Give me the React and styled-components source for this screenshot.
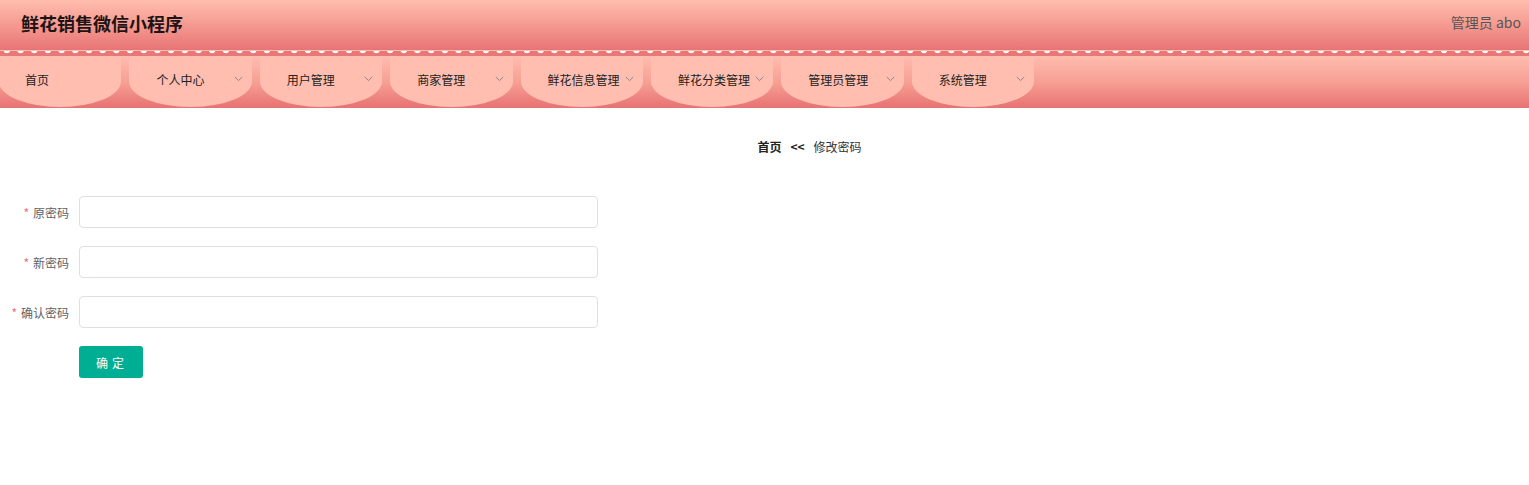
import React from 'react';
import styled, { createGlobalStyle } from 'styled-components';

const GlobalStyle = createGlobalStyle`
  body {
    margin: 0;
    background: #fff;
    font-family: "Microsoft YaHei", "Noto Sans CJK SC", "Noto Sans", sans-serif;
  }
`;

const Page = styled.div`
  width: 1529px;
  min-height: 485px;
  background: #fff;
  overflow: hidden;
`;

const Header = styled.div`
  height: 50px;
  display: flex;
  align-items: center;
  justify-content: space-between;
  padding: 0 8px 0 21px;
  box-sizing: border-box;
  background: linear-gradient(180deg, #ffbdae 0%, #f59a90 50%, #e77474 100%);
`;

const Title = styled.div`
  font-size: 18px;
  font-weight: bold;
  color: #1e1414;
  margin-top: -4px;
`;

const User = styled.div`
  font-size: 14px;
  color: #555;
  margin-top: -6px;
`;

const Lace = styled.div`
  height: 5px;
  border-top: 1px solid #ffbcb0;
  background-color: #e87878;
  background-image: radial-gradient(ellipse 3.2px 2.6px at 50% 0, #fff 0 80%, rgba(255, 255, 255, 0) 100%);
  background-size: 13.7px 4px;
  background-position: 0 0;
  background-repeat: repeat-x;
`;

const Nav = styled.div`
  height: 52px;
  display: flex;
  gap: 8px;
  margin-left: -1px;
  background: linear-gradient(180deg, #ffbcae 0%, #f7a094 50%, #e77272 100%);
`;

const NavItem = styled.div`
  width: 122.4px;
  flex: none;
  height: 51px;
  box-sizing: border-box;
  display: flex;
  align-items: center;
  justify-content: space-between;
  padding: 0 9px 5px ${(p) => (p.$first ? 26 : 27)}px;
  background: #ffbeb0;
  border-radius: 0 0 50% 50% / 0 0 50% 50%;
  font-size: 12px;
  color: #222;
`;

const Chevron = () => (
  <svg width="9" height="6" viewBox="0 0 9 6">
    <polyline points="0.8,1 4.5,4.6 8.2,1" fill="none" stroke="#888" strokeWidth="1" />
  </svg>
);

const Content = styled.div`
  padding: 31px 0 0 0;
`;

const Crumb = styled.div`
  font-size: 12px;
  color: #333;
  display: flex;
  justify-content: center;
  gap: 9px;
  padding-left: 90px;
  line-height: 16px;
`;

const CrumbBold = styled.span`
  font-weight: bold;
  color: #222;
`;

const Form = styled.div`
  margin-top: 41px;
  display: flex;
  flex-direction: column;
  gap: 18px;
`;

const Row = styled.div`
  display: flex;
  align-items: center;
`;

const Label = styled.label`
  width: 79px;
  box-sizing: border-box;
  padding-right: 10px;
  text-align: right;
  font-size: 12px;
  color: #606266;
`;

const Star = styled.span`
  color: #f56c6c;
  margin-right: 4px;
`;

const Input = styled.input`
  width: 519px;
  height: 32px;
  box-sizing: border-box;
  border: 1px solid #dcdfe6;
  border-radius: 4px;
  outline: none;
  padding: 0 15px;
  font-size: 12px;
`;

const Button = styled.button`
  margin-left: 79px;
  width: 64px;
  height: 32px;
  border: none;
  border-radius: 3px;
  background: #00ae93;
  color: #fff;
  font-size: 12px;
  letter-spacing: 4px;
  padding-left: 8px;
  font-family: inherit;
`;

const navItems = ['首页', '个人中心', '用户管理', '商家管理', '鲜花信息管理', '鲜花分类管理', '管理员管理', '系统管理'];

const fields = ['原密码', '新密码', '确认密码'];

export default function App() {
  return (
    <Page>
      <GlobalStyle />
      <Header>
        <Title>鲜花销售微信小程序</Title>
        <User>管理员 abo</User>
      </Header>
      <Lace />
      <Nav>
        {navItems.map((name, i) => (
          <NavItem key={name} $first={i === 0}>
            <span>{name}</span>
            {i > 0 && <Chevron />}
          </NavItem>
        ))}
      </Nav>
      <Content>
        <Crumb>
          <CrumbBold>首页</CrumbBold>
          <CrumbBold>&lt;&lt;</CrumbBold>
          <span>修改密码</span>
        </Crumb>
        <Form>
          {fields.map((f) => (
            <Row key={f}>
              <Label>
                <Star>*</Star>
                {f}
              </Label>
              <Input type="password" />
            </Row>
          ))}
          <Row>
            <Button>确定</Button>
          </Row>
        </Form>
      </Content>
    </Page>
  );
}
